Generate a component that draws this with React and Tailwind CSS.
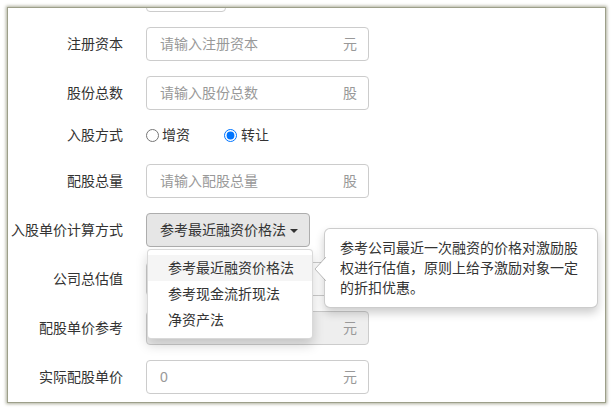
import { useState } from "react";

const font = "font-['Liberation_Sans','Noto_Sans_CJK_SC',sans-serif]";

const Label = ({ children }) => (
  <div className="w-[115px] shrink-0 text-right text-[14px] text-[#333]">{children}</div>
);

const UnitInput = ({ placeholder, unit, value, disabled }) => (
  <div
    className={`ml-[23px] flex h-[34px] w-[223px] items-center rounded-[4px] border border-[#ccc] pl-[13px] pr-[11px] ${
      disabled ? "bg-[#eee]" : "bg-white"
    }`}
  >
    <input
      className="min-w-0 flex-1 bg-transparent text-[14px] text-[#999] outline-none placeholder:text-[#999]"
      placeholder={placeholder}
      defaultValue={value}
      disabled={disabled}
    />
    {unit && <span className="text-[14px] text-[#999]">{unit}</span>}
  </div>
);

const methods = ["参考最近融资价格法", "参考现金流折现法", "净资产法"];

export default function App() {
  const [method, setMethod] = useState(methods[0]);

  return (
    <div className={`h-[412px] w-[612px] overflow-hidden bg-white pl-[7px] pt-[7px] ${font}`}>
      <div className="h-[396px] w-[599px] overflow-hidden border border-[#9d9f8a] bg-white shadow-[0_0_3px_1px_rgba(160,162,140,0.85)]">
        <div className="-mt-[30px] flex flex-col gap-[15px]">
          {/* row scrolled off the top */}
          <div className="flex h-[34px] items-center">
            <Label />
            <div className="ml-[23px] h-[34px] w-[80px] rounded-[4px] border border-[#ccc]" />
          </div>

          <div className="flex h-[34px] items-center">
            <Label>注册资本</Label>
            <UnitInput placeholder="请输入注册资本" unit="元" />
          </div>

          <div className="flex h-[34px] items-center">
            <Label>股份总数</Label>
            <UnitInput placeholder="请输入股份总数" unit="股" />
          </div>

          <div className="flex h-[24px] items-center pb-[4px]">
            <Label>入股方式</Label>
            <div className="ml-[23px] flex items-center text-[14px] text-[#333]">
              <label className="flex items-center">
                <input type="radio" name="way" className="m-0 h-[13px] w-[13px]" />
                <span className="ml-[3px]">增资</span>
              </label>
              <label className="ml-[34px] flex items-center">
                <input
                  type="radio"
                  name="way"
                  defaultChecked
                  className="m-0 h-[13px] w-[13px] accent-[#0075ff]"
                />
                <span className="ml-[4px]">转让</span>
              </label>
            </div>
          </div>

          <div className="flex h-[34px] items-center">
            <Label>配股总量</Label>
            <UnitInput placeholder="请输入配股总量" unit="股" />
          </div>

          <div className="relative z-10 flex h-[34px] items-center">
            <Label>入股单价计算方式</Label>
            <div className="relative ml-[23px]">
              <button className="flex h-[34px] w-[164px] items-center rounded-[4px] border border-[#adadad] bg-[#e6e6e6] pl-[13px] text-[14px] text-[#333]">
                {method}
                <span className="ml-[4px] mt-[2px] inline-block h-0 w-0 border-x-[4px] border-t-[4px] border-x-transparent border-t-[#333]" />
              </button>

              <ul className="absolute left-[1px] top-[36px] w-[166px] rounded-[4px] border border-[rgba(0,0,0,0.15)] bg-white py-[5px] text-[14px] text-[#333] shadow-[0_6px_12px_rgba(0,0,0,0.175)]">
                {methods.map((m, i) => (
                  <li
                    key={m}
                    onClick={() => setMethod(m)}
                    className={`h-[26px] pl-[20px] leading-[26px] ${i === 0 ? "bg-[#f5f5f5]" : ""}`}
                  >
                    {m}
                  </li>
                ))}
              </ul>

              <div className="absolute left-[178px] top-[15px] w-[274px] rounded-[6px] border border-[rgba(0,0,0,0.2)] bg-white px-[15px] py-[9px] text-[14px] leading-[20px] text-[#333] shadow-[0_5px_10px_rgba(0,0,0,0.2)]">
                <svg
                  className="absolute -left-[11px] top-[28px]"
                  width="12"
                  height="24"
                  viewBox="0 0 12 24"
                >
                  <path d="M12 0 L1 12 L12 24 Z" fill="#fff" />
                  <path d="M12 0 L1 12 L12 24" fill="none" stroke="rgba(0,0,0,0.25)" />
                </svg>
                参考公司最近一次融资的价格对激励股权进行估值，原则上给予激励对象一定的折扣优惠。
              </div>
            </div>
          </div>

          <div className="flex h-[34px] items-center">
            <Label>公司总估值</Label>
            <UnitInput placeholder="" />
          </div>

          <div className="flex h-[34px] items-center">
            <Label>配股单价参考</Label>
            <UnitInput placeholder="" unit="元" disabled />
          </div>

          <div className="flex h-[34px] items-center">
            <Label>实际配股单价</Label>
            <UnitInput value="0" unit="元" />
          </div>
        </div>
      </div>
    </div>
  );
}
